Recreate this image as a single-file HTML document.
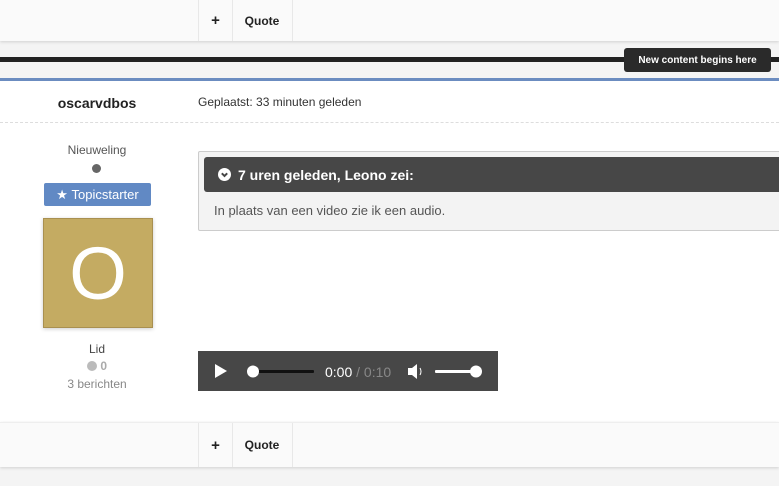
<!DOCTYPE html><html><head><style>
body{margin:0;width:779px;height:486px;overflow:hidden;background:#f4f4f4;font-family:"Liberation Sans",sans-serif;position:relative}
.a{position:absolute}
.bar{left:0;width:779px;background:#fafafa;box-shadow:0 1px 3px rgba(0,0,0,.15)}
.btn{top:0;height:100%;border-left:1px solid #e8e8e8;border-right:1px solid #e8e8e8;font-size:12px;font-weight:bold;color:#222;display:flex;align-items:center;justify-content:center;box-sizing:border-box}
</style></head><body>
<div class="a bar" style="top:0;height:41px">
 <div class="a btn" style="left:198px;width:35px;font-size:15px">+</div>
 <div class="a btn" style="left:232px;width:61px;border-left:none">Quote</div>
</div>
<div class="a" style="left:0;top:57px;width:779px;height:5px;background:#222"></div>
<div class="a" style="left:624px;top:48px;width:147px;height:24px;background:#2a2a2a;border-radius:3px;color:#fff;font-size:10px;font-weight:bold;display:flex;align-items:center;justify-content:center">New content begins here</div>
<div class="a" style="left:0;top:78px;width:779px;height:3px;background:#6b8cc0"></div>
<div class="a" style="left:0;top:81px;width:779px;height:341px;background:#fff"></div>
<div class="a" style="left:0;top:95px;width:194px;text-align:center;font-size:14px;font-weight:bold;color:#222">oscarvdbos</div>
<div class="a" style="left:198px;top:95px;font-size:12px;color:#333">Geplaatst: 33 minuten geleden</div>
<div class="a" style="left:0;top:122px;width:779px;border-top:1px dashed #ddd"></div>
<div class="a" style="left:0;top:143px;width:194px;text-align:center;font-size:12px;color:#555">Nieuweling</div>
<div class="a" style="left:92px;top:164px;width:9px;height:9px;border-radius:50%;background:#666"></div>
<div class="a" style="left:44px;top:183px;width:107px;height:23px;background:#6189c4;border-radius:2px;color:#fff;font-size:13px;display:flex;align-items:center;justify-content:center">★&nbsp;Topicstarter</div>
<div class="a" style="left:43px;top:218px;width:110px;height:110px;background:#c4ab62;box-shadow:0 1px 4px rgba(0,0,0,.2);border:1px solid #a99050;box-sizing:border-box;color:#fff;font-size:74px;display:flex;align-items:center;justify-content:center">O</div>
<div class="a" style="left:0;top:342px;width:194px;text-align:center;font-size:12px;color:#444">Lid</div>
<div class="a" style="left:0;top:359px;width:194px;text-align:center;font-size:12px;color:#aaa;font-weight:bold"><span style="display:inline-block;width:10px;height:10px;border-radius:50%;background:#bbb;vertical-align:-1px"></span> 0</div>
<div class="a" style="left:0;top:377px;width:194px;text-align:center;font-size:12px;color:#888">3 berichten</div>
<div class="a" style="left:198px;top:151px;width:600px;height:80px;background:#f3f3f3;border:1px solid #ccc;box-sizing:border-box;border-radius:2px"></div>
<div class="a" style="left:204px;top:157px;width:600px;height:35px;background:#474747;border-radius:3px;color:#fff;font-size:14px;font-weight:bold;display:flex;align-items:center"><svg width="13" height="13" style="margin:0 7px 0 14px"><circle cx="6.5" cy="6.5" r="6.5" fill="#fff"/><path d="M3.8 5.3l2.7 2.7 2.7-2.7" stroke="#474747" stroke-width="2" fill="none"/></svg>7 uren geleden, Leono zei:</div>
<div class="a" style="left:214px;top:203px;font-size:13px;color:#555">In plaats van een video zie ik een audio.</div>
<div class="a" style="left:198px;top:351px;width:300px;height:40px;background:#474747"></div>
<svg class="a" style="left:198px;top:351px" width="300" height="40"><path d="M17 13v14l12-7z" fill="#fff"/><rect x="54" y="19" width="62" height="3" rx="1" fill="#111"/><circle cx="55" cy="20.5" r="6" fill="#fff"/><text x="127" y="26" fill="#fff" font-size="14" font-family="Liberation Sans">0:00 <tspan fill="#888">/ 0:10</tspan></text><path d="M210 17h4l5-4v15l-5-4h-4z" fill="#fff"/><path d="M222 17q2 3.5 0 7" stroke="#fff" fill="none"/><rect x="237" y="19" width="42" height="3" rx="1" fill="#fff"/><circle cx="278" cy="20.5" r="6" fill="#fff"/></svg>
<div class="a bar" style="top:422px;height:44px;border-top:1px solid #eee">
 <div class="a btn" style="left:198px;width:35px;font-size:15px">+</div>
 <div class="a btn" style="left:232px;width:61px;border-left:none">Quote</div>
</div>
</body></html>
